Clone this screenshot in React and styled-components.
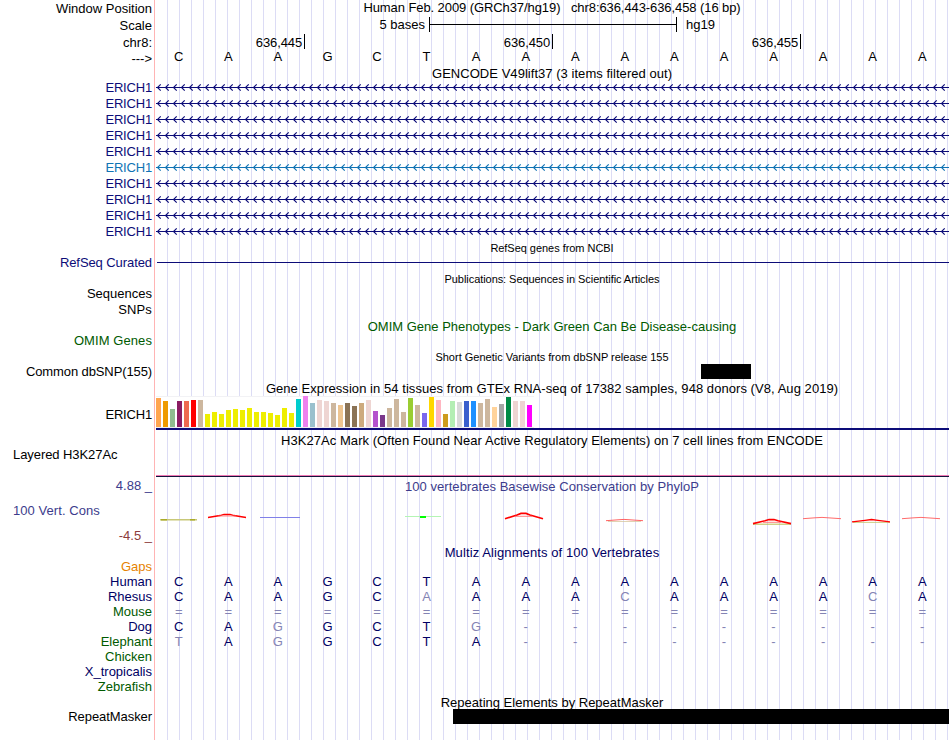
import React from "react";
import styled, { createGlobalStyle } from "styled-components";

const navy = "#0c0c78";
const alignBlue = "#000064";
const green = "#005a00";

const GlobalStyle = createGlobalStyle`
  body {
    margin: 0;
    background: #fff;
  }
`;

const genes = [navy, navy, navy, navy, navy, "#1073b4", navy, navy, navy, navy];

const tissues = [
  [29, "#ffa54f"], [26, "#ee9a00"], [18, "#8fbc8f"], [26, "#8b1c62"],
  [26, "#ee6a50"], [27, "#ff0000"], [27, "#cdb79e"], [13, "#eeee00"],
  [15, "#eeee00"], [13, "#eeee00"], [17, "#eeee00"], [18, "#eeee00"],
  [17, "#eeee00"], [19, "#eeee00"], [15, "#eeee00"], [15, "#eeee00"],
  [14, "#eeee00"], [12, "#eeee00"], [19, "#eeee00"], [14, "#eeee00"],
  [28, "#00cdcd"], [31, "#ee82ee"], [24, "#9ac0cd"], [27, "#eed5d2"],
  [26, "#eed5d2"], [24, "#cdb79e"], [22, "#eec591"], [24, "#8b7355"],
  [21, "#8b7355"], [24, "#cdaa7d"], [27, "#eed5d2"], [16, "#b452cd"],
  [12, "#7a378b"], [19, "#cdb79e"], [28, "#cdb79e"], [15, "#cdb79e"],
  [29, "#9acd32"], [22, "#cdb79e"], [14, "#7a67ee"], [30, "#ffd700"],
  [27, "#ffb6c1"], [13, "#cd9b1d"], [26, "#b4eeb4"], [25, "#d9d9d9"],
  [26, "#3a5fcd"], [26, "#1e90ff"], [24, "#cdb79e"], [28, "#cdb79e"],
  [20, "#ffd39b"], [23, "#a6a6a6"], [30, "#008b45"], [26, "#eed5d2"],
  [26, "#eed5d2"], [22, "#ff00ff"],
];

// lower case marks a base that differs from the human one
const species = [
  { name: "Gaps", color: "#e68200", bases: "" },
  { name: "Human", color: alignBlue, bases: "CAAGCTAAAAAAAAAA" },
  { name: "Rhesus", color: alignBlue, bases: "CAAGCaAAAcAAAAcA" },
  { name: "Mouse", color: green, bases: "================" },
  { name: "Dog", color: alignBlue, bases: "CAgGCTg---------" },
  { name: "Elephant", color: green, bases: "tAgGCTA---------" },
  { name: "Chicken", color: green, bases: "" },
  { name: "X_tropicalis", color: alignBlue, bases: "" },
  { name: "Zebrafish", color: green, bases: "" },
];

function Bases({ sequence, color }) {
  return (
    <BaseGrid>
      {sequence.split("").map((base, i) => (
        <Base key={i} color={/[A-Z]/.test(base) ? color : "#8484b4"}>
          {base.toUpperCase()}
        </Base>
      ))}
    </BaseGrid>
  );
}

function Intron({ color }) {
  const arrows = [];
  for (let x = 1; x < 793; x += 8) {
    arrows.push(`M${x + 3.7} 4.3L${x + 0.5} 7.5L${x + 3.7} 10.7`);
  }
  return (
    <svg width="793" height="16" fill="none" stroke={color}>
      <path d="M0 7.5H793" />
      <path d={arrows.join("")} strokeWidth="1.15" />
    </svg>
  );
}

function Conservation() {
  return (
    <svg width="793" height="47" fill="none">
      <path d="M4 21.8H41" stroke="#c8c878" strokeWidth="1.4" />
      <path d="M5 21.8H11M34 21.8H39" stroke="#aaaa28" strokeWidth="1.4" />
      <path d="M52 19.5L64 17.6L68 16.4H74L78 17.6L90 19.5" stroke="#ff0000" strokeWidth="1.5" />
      <path d="M62 18H80" stroke="#ff7070" strokeWidth="0.8" />
      <path d="M104 19.5H144" stroke="#8080e8" />
      <path d="M249 18.5H285" stroke="#b4f5b4" />
      <path d="M264 19H270" stroke="#00ff00" strokeWidth="2" />
      <path d="M349 20.8L361 17L365 15.4H370L374 17L387 20.8" stroke="#ff0000" strokeWidth="1.7" />
      <path d="M359 18.3H376" stroke="#ff7070" strokeWidth="0.9" />
      <path d="M450 22.7L462 21.8L468 21.4L474 21.8L487 22.7" stroke="#ff5050" strokeWidth="0.9" />
      <path d="M452 23.5H485" stroke="#d8c8a0" strokeWidth="0.8" />
      <path d="M597 26.2H635" stroke="#b4b43c" strokeWidth="0.9" />
      <path d="M597 25.6L609 22.8L613 21.6H618L622 22.8L635 25.6" stroke="#ff0000" strokeWidth="1.6" />
      <path d="M607 24.3H625" stroke="#ff7070" strokeWidth="0.9" />
      <path d="M647 20.7L659 19.8L666 19.4L672 19.8L685 20.7" stroke="#ff5a5a" strokeWidth="0.9" />
      <path d="M697 24.4H734" stroke="#c8c878" strokeWidth="0.9" />
      <path d="M696 23.8L709 22.3L715.5 21.5L722 22.3L734 23.8" stroke="#ff0000" strokeWidth="1.3" />
      <path d="M746 20.7L758 19.8L765 19.4L771 19.8L784 20.7" stroke="#ff5a5a" strokeWidth="0.9" />
    </svg>
  );
}

function App() {
  return (
    <>
      <GlobalStyle />
      <Browser>
        <Row height={17}>
          <Label drop={1}>Window Position</Label>
          <Title spacing={-0.085}>
            {"Human Feb. 2009 (GRCh37/hg19)   chr8:636,443-636,458 (16 bp)"}
          </Title>
        </Row>
        <Row height={17}>
          <Label drop={1}>Scale</Label>
          <Scale>
            <ScaleText align="right">5 bases</ScaleText>
            <ScaleBar />
            <ScaleText>hg19</ScaleText>
          </Scale>
        </Row>
        <Row height={15}>
          <Label drop={1}>chr8:</Label>
          <Ruler>
            <Tick>636,445</Tick>
            <Tick>636,450</Tick>
            <Tick>636,455</Tick>
          </Ruler>
        </Row>
        <Row height={17}>
          <Label drop={2}>---&gt;</Label>
          <Bases sequence="CAAGCTAAAAAAAAAA" color="#000" />
        </Row>

        <Row height={14}>
          <Title spacing={0.04}>GENCODE V49lift37 (3 items filtered out)</Title>
        </Row>
        {genes.map((color, i) => (
          <Row key={i} height={16}>
            <Label spacing={-0.18} color={color}>ERICH1</Label>
            <Intron color={color} />
          </Row>
        ))}

        <Row height={15}>
          <Title small spacing={-0.04}>RefSeq genes from NCBI</Title>
        </Row>
        <Row height={16}>
          <Label spacing={-0.08} color={navy}>RefSeq Curated</Label>
          <GeneLine />
        </Row>

        <Row height={15}>
          <Title small spacing={-0.06}>
            Publications: Sequences in Scientific Articles
          </Title>
        </Row>
        <Row height={16}>
          <Label>Sequences</Label>
        </Row>
        <Row height={16}>
          <Label spacing={0.15}>SNPs</Label>
        </Row>

        <Row height={15}>
          <Title drop={1} color={green}>
            OMIM Gene Phenotypes - Dark Green Can Be Disease-causing
          </Title>
        </Row>
        <Row height={16}>
          <Label spacing={0.08} color={green}>OMIM Genes</Label>
        </Row>

        <Row height={15}>
          <Title small>Short Genetic Variants from dbSNP release 155</Title>
        </Row>
        <Row height={17}>
          <Label spacing={-0.11}>Common dbSNP(155)</Label>
          <Block start={545} width={50} />
        </Row>

        <Row height={15}>
          <Title spacing={0.055}>
            Gene Expression in 54 tissues from GTEx RNA-seq of 17382 samples, 948 donors (V8, Aug 2019)
          </Title>
        </Row>
        <Row height={34}>
          <Label drop={11} spacing={-0.18}>ERICH1</Label>
          <Expression>
            <Bars>
              {tissues.map(([height, color], i) => (
                <Bar key={i} style={{ height, background: color }} />
              ))}
            </Bars>
          </Expression>
        </Row>

        <Row height={17}>
          <Title drop={3} spacing={0.05}>
            H3K27Ac Mark (Often Found Near Active Regulatory Elements) on 7 cell lines from ENCODE
          </Title>
        </Row>
        <Row height={30}>
          <Label align="left" spacing={-0.07}>Layered H3K27Ac</Label>
          <SignalLine />
        </Row>

        <Row height={21}>
          <Label drop={1} color="#3c3c8c">4.88 _</Label>
          <Title drop={2} spacing={0.04} color="#3c3c8c">
            100 vertebrates Basewise Conservation by PhyloP
          </Title>
        </Row>
        <Row height={47}>
          <LabelStack>
            <Label drop={5} align="left" spacing={0.06} color="#3c3c8c">
              100 Vert. Cons
            </Label>
            <Label drop={10} color="#8c3c3c">-4.5 _</Label>
          </LabelStack>
          <Conservation />
        </Row>

        <Row height={14}>
          <Title spacing={0.1} color={alignBlue}>
            Multiz Alignments of 100 Vertebrates
          </Title>
        </Row>
        {species.map(({ name, color, bases }) => (
          <Row key={name} height={15}>
            <Label color={color}>{name}</Label>
            <Bases sequence={bases} color={alignBlue} />
          </Row>
        ))}

        <Row height={15}>
          <Title drop={1}>Repeating Elements by RepeatMasker</Title>
        </Row>
        <Row height={31}>
          <Label spacing={-0.07}>RepeatMasker</Label>
          <Block start={297} width={496} />
        </Row>
      </Browser>
    </>
  );
}

const Browser = styled.main`
  width: 949px;
  height: 740px;
  overflow: hidden;
  font-family: "Liberation Sans", Arial, sans-serif;
  font-size: 13px;
  line-height: 15px;
  color: #000;
  white-space: pre;
  background-image: linear-gradient(#ffb4b4, #ffb4b4),
    repeating-linear-gradient(
      to right,
      transparent 0 11px,
      #dcdcf5 11px 12px
    );
  background-position: 154px 0, 156px 0;
  background-size: 1px 100%, 793px 100%;
  background-repeat: no-repeat;
`;

const Row = styled.div`
  display: grid;
  grid-template-columns: 152px 793px;
  column-gap: 4px;
  height: ${(props) => props.height}px;

  svg {
    display: block;
  }
`;

const Label = styled.div`
  padding-top: ${(props) => props.drop || 0}px;
  padding-left: 13px;
  text-align: ${(props) => props.align || "right"};
  letter-spacing: ${(props) => props.spacing || 0}px;
  color: ${(props) => props.color || "#000"};
`;

const LabelStack = styled.div`
  display: flex;
  flex-direction: column;
`;

const Title = styled.div`
  grid-column: 2;
  padding-top: ${(props) => props.drop || 0}px;
  margin-left: -1px;
  text-align: center;
  font-size: ${(props) => (props.small ? 11 : 13)}px;
  line-height: ${(props) => (props.small ? 16 : 15)}px;
  letter-spacing: ${(props) => props.spacing || 0}px;
  color: ${(props) => props.color || "#000"};
`;

const Scale = styled.div`
  display: grid;
  grid-template-columns: 269px 248px auto;
  column-gap: 4px;
`;

const ScaleText = styled.span`
  text-align: ${(props) => props.align || "left"};
  padding-left: 5px;
`;

const ScaleBar = styled.div`
  height: 15px;
  box-sizing: border-box;
  border: solid #000;
  border-width: 0 1px;
  background: linear-gradient(#000, #000) 0 7px / 100% 1px no-repeat;
`;

const Ruler = styled.div`
  display: grid;
  grid-template-columns: 149px 248px 248px;
`;

const Tick = styled.div`
  padding-top: 1px;
  padding-right: 2px;
  height: 14px;
  text-align: right;
  letter-spacing: -0.12px;
  border-right: 1px solid #000;
`;

const BaseGrid = styled.div`
  display: grid;
  grid-template-columns: repeat(16, 1fr);
  margin: 0 2px 0 -2px;
`;

const Base = styled.span`
  text-align: center;
  color: ${(props) => props.color};
`;

const GeneLine = styled.div`
  height: 1px;
  margin: 7px 0 0 1px;
  background: ${navy};
`;

const Block = styled.div`
  height: 15px;
  width: ${(props) => props.width}px;
  margin-left: ${(props) => props.start}px;
  background: #000;
`;

const Expression = styled.div`
  height: 32px;
  border-bottom: 2px solid ${navy};
`;

const Bars = styled.div`
  display: flex;
  align-items: flex-end;
  gap: 2px;
  box-sizing: border-box;
  width: 378px;
  height: 32px;
  padding-bottom: 1px;
  background: linear-gradient(#f2f2f5, #f2f2f5) 0 0 / 100% 1px no-repeat,
    linear-gradient(#ececf0, #ececf0) 0 100% / 100% 1px no-repeat, #fff;
`;

const Bar = styled.div`
  width: 5px;
`;

const SignalLine = styled.div`
  height: 1px;
  margin-top: 28px;
  background: #f078b4;
  border-bottom: 1px solid #14143c;
`;

export default App;
